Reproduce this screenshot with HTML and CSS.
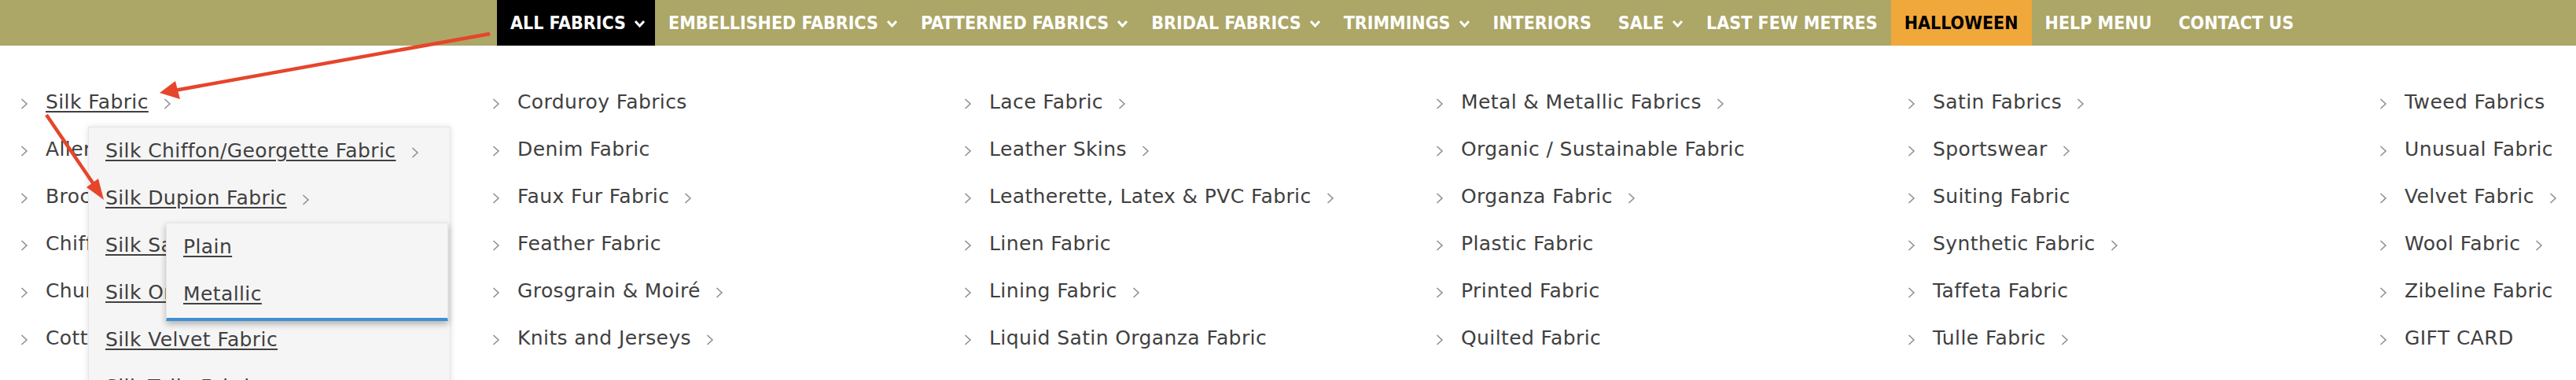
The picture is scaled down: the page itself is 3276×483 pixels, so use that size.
FILE: index.html
```html
<!DOCTYPE html>
<html lang="en">
<head>
<meta charset="utf-8">
<title>All Fabrics</title>
<link rel="stylesheet" href="styles.css">
</head>
<body>
<div class="page">
  <nav class="topnav">
    <a class="nav-item active has-sub">ALL FABRICS<svg class="nav-chev" viewBox="0 0 15 10"><path d="M2 2 L7.5 8 L13 2"/></svg></a>
    <a class="nav-item has-sub">EMBELLISHED FABRICS<svg class="nav-chev" viewBox="0 0 15 10"><path d="M2 2 L7.5 8 L13 2"/></svg></a>
    <a class="nav-item has-sub">PATTERNED FABRICS<svg class="nav-chev" viewBox="0 0 15 10"><path d="M2 2 L7.5 8 L13 2"/></svg></a>
    <a class="nav-item has-sub">BRIDAL FABRICS<svg class="nav-chev" viewBox="0 0 15 10"><path d="M2 2 L7.5 8 L13 2"/></svg></a>
    <a class="nav-item has-sub">TRIMMINGS<svg class="nav-chev" viewBox="0 0 15 10"><path d="M2 2 L7.5 8 L13 2"/></svg></a>
    <a class="nav-item">INTERIORS</a>
    <a class="nav-item has-sub">SALE<svg class="nav-chev" viewBox="0 0 15 10"><path d="M2 2 L7.5 8 L13 2"/></svg></a>
    <a class="nav-item">LAST FEW METRES</a>
    <a class="nav-item halloween">HALLOWEEN</a>
    <a class="nav-item">HELP MENU</a>
    <a class="nav-item">CONTACT US</a>
  </nav>

  <div class="mega">
    <ul class="col">
      <li class="item open">
        <svg class="chev" viewBox="0 0 10 14"><path d="M1.5 1 L8 7 L1.5 13"/></svg>
        <a class="link hover">Silk Fabric</a>
        <svg class="chev trail" viewBox="0 0 10 14"><path d="M1.5 1 L8 7 L1.5 13"/></svg>
        <ul class="sub sub1">
          <li class="item"><a class="link hover">Silk Chiffon/Georgette Fabric</a><svg class="chev trail" viewBox="0 0 10 14"><path d="M1.5 1 L8 7 L1.5 13"/></svg></li>
          <li class="item open"><a class="link hover">Silk Dupion Fabric</a><svg class="chev trail" viewBox="0 0 10 14"><path d="M1.5 1 L8 7 L1.5 13"/></svg>
            <ul class="sub sub2">
              <li class="item"><a class="link hover">Plain</a></li>
              <li class="item"><a class="link hover">Metallic</a></li>
            </ul>
          </li>
          <li class="item"><a class="link hover">Silk Satin Fabric</a></li>
          <li class="item"><a class="link hover">Silk Organza Fabric</a></li>
          <li class="item"><a class="link hover">Silk Velvet Fabric</a></li>
          <li class="item"><a class="link hover">Silk Tulle Fabric</a></li>
        </ul>
      </li>
      <li class="item"><svg class="chev" viewBox="0 0 10 14"><path d="M1.5 1 L8 7 L1.5 13"/></svg><a class="link">Allergy Friendly Fabric</a></li>
      <li class="item"><svg class="chev" viewBox="0 0 10 14"><path d="M1.5 1 L8 7 L1.5 13"/></svg><a class="link">Brocade Fabric</a></li>
      <li class="item"><svg class="chev" viewBox="0 0 10 14"><path d="M1.5 1 L8 7 L1.5 13"/></svg><a class="link">Chiffon Fabric</a></li>
      <li class="item"><svg class="chev" viewBox="0 0 10 14"><path d="M1.5 1 L8 7 L1.5 13"/></svg><a class="link">Chunky Knit Fabric</a></li>
      <li class="item"><svg class="chev" viewBox="0 0 10 14"><path d="M1.5 1 L8 7 L1.5 13"/></svg><a class="link">Cotton Fabric</a></li>
    </ul>
    <ul class="col">
      <li class="item"><svg class="chev" viewBox="0 0 10 14"><path d="M1.5 1 L8 7 L1.5 13"/></svg><a class="link">Corduroy Fabrics</a></li>
      <li class="item"><svg class="chev" viewBox="0 0 10 14"><path d="M1.5 1 L8 7 L1.5 13"/></svg><a class="link">Denim Fabric</a></li>
      <li class="item"><svg class="chev" viewBox="0 0 10 14"><path d="M1.5 1 L8 7 L1.5 13"/></svg><a class="link">Faux Fur Fabric</a><svg class="chev trail" viewBox="0 0 10 14"><path d="M1.5 1 L8 7 L1.5 13"/></svg></li>
      <li class="item"><svg class="chev" viewBox="0 0 10 14"><path d="M1.5 1 L8 7 L1.5 13"/></svg><a class="link">Feather Fabric</a></li>
      <li class="item"><svg class="chev" viewBox="0 0 10 14"><path d="M1.5 1 L8 7 L1.5 13"/></svg><a class="link">Grosgrain &amp; Moiré</a><svg class="chev trail" viewBox="0 0 10 14"><path d="M1.5 1 L8 7 L1.5 13"/></svg></li>
      <li class="item"><svg class="chev" viewBox="0 0 10 14"><path d="M1.5 1 L8 7 L1.5 13"/></svg><a class="link">Knits and Jerseys</a><svg class="chev trail" viewBox="0 0 10 14"><path d="M1.5 1 L8 7 L1.5 13"/></svg></li>
    </ul>
    <ul class="col">
      <li class="item"><svg class="chev" viewBox="0 0 10 14"><path d="M1.5 1 L8 7 L1.5 13"/></svg><a class="link">Lace Fabric</a><svg class="chev trail" viewBox="0 0 10 14"><path d="M1.5 1 L8 7 L1.5 13"/></svg></li>
      <li class="item"><svg class="chev" viewBox="0 0 10 14"><path d="M1.5 1 L8 7 L1.5 13"/></svg><a class="link">Leather Skins</a><svg class="chev trail" viewBox="0 0 10 14"><path d="M1.5 1 L8 7 L1.5 13"/></svg></li>
      <li class="item"><svg class="chev" viewBox="0 0 10 14"><path d="M1.5 1 L8 7 L1.5 13"/></svg><a class="link">Leatherette, Latex &amp; PVC Fabric</a><svg class="chev trail" viewBox="0 0 10 14"><path d="M1.5 1 L8 7 L1.5 13"/></svg></li>
      <li class="item"><svg class="chev" viewBox="0 0 10 14"><path d="M1.5 1 L8 7 L1.5 13"/></svg><a class="link">Linen Fabric</a></li>
      <li class="item"><svg class="chev" viewBox="0 0 10 14"><path d="M1.5 1 L8 7 L1.5 13"/></svg><a class="link">Lining Fabric</a><svg class="chev trail" viewBox="0 0 10 14"><path d="M1.5 1 L8 7 L1.5 13"/></svg></li>
      <li class="item"><svg class="chev" viewBox="0 0 10 14"><path d="M1.5 1 L8 7 L1.5 13"/></svg><a class="link">Liquid Satin Organza Fabric</a></li>
    </ul>
    <ul class="col">
      <li class="item"><svg class="chev" viewBox="0 0 10 14"><path d="M1.5 1 L8 7 L1.5 13"/></svg><a class="link">Metal &amp; Metallic Fabrics</a><svg class="chev trail" viewBox="0 0 10 14"><path d="M1.5 1 L8 7 L1.5 13"/></svg></li>
      <li class="item"><svg class="chev" viewBox="0 0 10 14"><path d="M1.5 1 L8 7 L1.5 13"/></svg><a class="link">Organic / Sustainable Fabric</a></li>
      <li class="item"><svg class="chev" viewBox="0 0 10 14"><path d="M1.5 1 L8 7 L1.5 13"/></svg><a class="link">Organza Fabric</a><svg class="chev trail" viewBox="0 0 10 14"><path d="M1.5 1 L8 7 L1.5 13"/></svg></li>
      <li class="item"><svg class="chev" viewBox="0 0 10 14"><path d="M1.5 1 L8 7 L1.5 13"/></svg><a class="link">Plastic Fabric</a></li>
      <li class="item"><svg class="chev" viewBox="0 0 10 14"><path d="M1.5 1 L8 7 L1.5 13"/></svg><a class="link">Printed Fabric</a></li>
      <li class="item"><svg class="chev" viewBox="0 0 10 14"><path d="M1.5 1 L8 7 L1.5 13"/></svg><a class="link">Quilted Fabric</a></li>
    </ul>
    <ul class="col">
      <li class="item"><svg class="chev" viewBox="0 0 10 14"><path d="M1.5 1 L8 7 L1.5 13"/></svg><a class="link">Satin Fabrics</a><svg class="chev trail" viewBox="0 0 10 14"><path d="M1.5 1 L8 7 L1.5 13"/></svg></li>
      <li class="item"><svg class="chev" viewBox="0 0 10 14"><path d="M1.5 1 L8 7 L1.5 13"/></svg><a class="link">Sportswear</a><svg class="chev trail" viewBox="0 0 10 14"><path d="M1.5 1 L8 7 L1.5 13"/></svg></li>
      <li class="item"><svg class="chev" viewBox="0 0 10 14"><path d="M1.5 1 L8 7 L1.5 13"/></svg><a class="link">Suiting Fabric</a></li>
      <li class="item"><svg class="chev" viewBox="0 0 10 14"><path d="M1.5 1 L8 7 L1.5 13"/></svg><a class="link">Synthetic Fabric</a><svg class="chev trail" viewBox="0 0 10 14"><path d="M1.5 1 L8 7 L1.5 13"/></svg></li>
      <li class="item"><svg class="chev" viewBox="0 0 10 14"><path d="M1.5 1 L8 7 L1.5 13"/></svg><a class="link">Taffeta Fabric</a></li>
      <li class="item"><svg class="chev" viewBox="0 0 10 14"><path d="M1.5 1 L8 7 L1.5 13"/></svg><a class="link">Tulle Fabric</a><svg class="chev trail" viewBox="0 0 10 14"><path d="M1.5 1 L8 7 L1.5 13"/></svg></li>
    </ul>
    <ul class="col">
      <li class="item"><svg class="chev" viewBox="0 0 10 14"><path d="M1.5 1 L8 7 L1.5 13"/></svg><a class="link">Tweed Fabrics</a></li>
      <li class="item"><svg class="chev" viewBox="0 0 10 14"><path d="M1.5 1 L8 7 L1.5 13"/></svg><a class="link">Unusual Fabric</a></li>
      <li class="item"><svg class="chev" viewBox="0 0 10 14"><path d="M1.5 1 L8 7 L1.5 13"/></svg><a class="link">Velvet Fabric</a><svg class="chev trail" viewBox="0 0 10 14"><path d="M1.5 1 L8 7 L1.5 13"/></svg></li>
      <li class="item"><svg class="chev" viewBox="0 0 10 14"><path d="M1.5 1 L8 7 L1.5 13"/></svg><a class="link">Wool Fabric</a><svg class="chev trail" viewBox="0 0 10 14"><path d="M1.5 1 L8 7 L1.5 13"/></svg></li>
      <li class="item"><svg class="chev" viewBox="0 0 10 14"><path d="M1.5 1 L8 7 L1.5 13"/></svg><a class="link">Zibeline Fabric</a></li>
      <li class="item"><svg class="chev" viewBox="0 0 10 14"><path d="M1.5 1 L8 7 L1.5 13"/></svg><a class="link">GIFT CARD</a></li>
    </ul>
  </div>

  <svg class="annot" width="3276" height="483" viewBox="0 0 3276 483">
    <line x1="623" y1="43" x2="222" y2="115" />
    <polygon points="203,118 223,103 229,126" />
    <line x1="59" y1="146" x2="119" y2="234" />
    <polygon points="132,254 125,227 110,238" />
  </svg>
</div>
</body>
</html>
```

FILE: styles.css
```css
html, body {
  margin: 0;
  padding: 0;
  background: #ffffff;
  overflow: hidden;
}

.page {
  position: relative;
  width: 3276px;
  height: 483px;
  overflow: hidden;
}

/* ---------- top navigation ---------- */
.topnav {
  display: flex;
  height: 58px;
  padding-left: 632px;
  background: #aca667;
  font-family: "DejaVu Sans Condensed", "DejaVu Sans", sans-serif;
  font-stretch: condensed;
  font-weight: 700;
  font-size: 23px;
}

.nav-item {
  display: flex;
  align-items: center;
  padding: 0 17px;
  line-height: 58px;
  color: #ffffff;
  white-space: nowrap;
  text-decoration: none;
}

.nav-item.has-sub {
  padding-right: 12px;
}

.nav-item.active {
  background: #000000;
}

.nav-item.halloween {
  background: #f1a83a;
  color: #000000;
}

.nav-chev {
  width: 15px;
  height: 10px;
  margin-left: 10px;
  margin-top: 1px;
  fill: none;
  stroke: #ffffff;
  stroke-width: 3;
}

/* ---------- mega menu ---------- */
.mega {
  display: grid;
  grid-template-columns: repeat(6, 600px);
  padding-top: 42px;
  font-family: "DejaVu Sans", sans-serif;
  font-size: 25px;
  letter-spacing: 0.4px;
  color: #404040;
}

.col,
.sub {
  list-style: none;
  margin: 0;
  padding: 0;
}

.item {
  position: relative;
  display: flex;
  align-items: center;
  height: 60px;
  line-height: 60px;
  padding-left: 26px;
  white-space: nowrap;
}

.chev {
  flex: none;
  width: 10px;
  height: 14px;
  margin-right: 22px;
  margin-top: 3px;
  fill: none;
  stroke: #8d8d8d;
  stroke-width: 1.5;
}

.chev.trail {
  margin-left: 19px;
  margin-right: 0;
}

.link {
  color: #404040;
  text-decoration: none;
}

.link.hover {
  text-decoration: underline;
  text-decoration-thickness: 2px;
  text-underline-offset: 3px;
}

/* flyout submenus */
.sub {
  position: absolute;
  z-index: 2;
  background: #f5f5f5;
  border: 1px solid #e6e6e6;
}

.sub .item {
  padding-left: 21px;
}

.sub1 {
  left: 112px;
  top: 61px;
  width: 459px;
  height: 600px;
  box-shadow: 0 0 8px rgba(0, 0, 0, 0.12);
}

.sub2 {
  left: 98px;
  top: 61px;
  width: 357px;
  border-bottom: 4px solid #3f8fd3;
  box-shadow: 0 4px 8px rgba(0, 0, 0, 0.28);
  z-index: 3;
}

/* annotation arrows */
.annot {
  position: absolute;
  left: 0;
  top: 0;
  z-index: 10;
  pointer-events: none;
}

.annot line {
  stroke: #e6452b;
  stroke-width: 4.5;
}

.annot polygon {
  fill: #e6452b;
}
```
